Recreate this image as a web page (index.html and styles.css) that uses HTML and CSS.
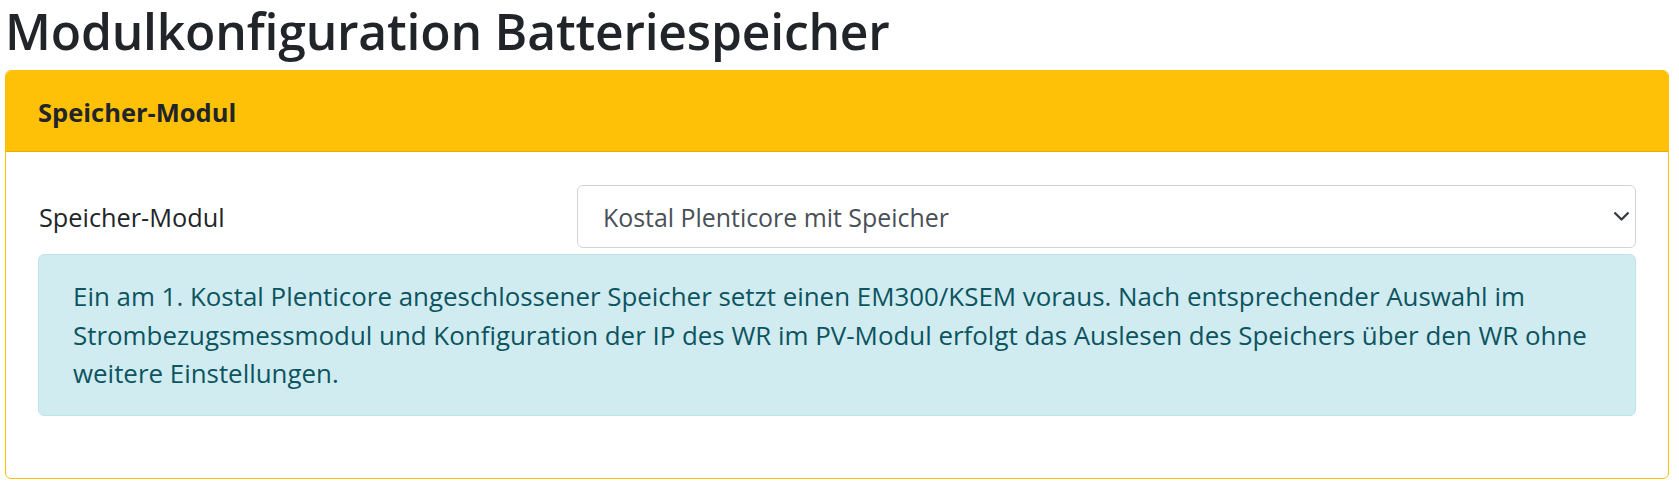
FILE: index.html
```html
<!DOCTYPE html>
<html lang="de">
<head>
<meta charset="utf-8">
<title>Modulkonfiguration Batteriespeicher</title>
<link rel="stylesheet" href="styles.css">
</head>
<body>
<div class="page">
  <h1 class="title">Modulkonfiguration Batteriespeicher</h1>
  <div class="card">
    <div class="card-header">Speicher-Modul</div>
    <div class="card-body">
      <div class="form-row">
        <label class="label">Speicher-Modul</label>
        <div class="select">
          <span class="select-text">Kostal Plenticore mit Speicher</span>
          <svg class="chevron" width="15" height="9" viewBox="0 0 15 9"><path d="M1.2 1.2l6.3 6.3 6.3-6.3" fill="none" stroke="#343a40" stroke-width="2.3" stroke-linecap="round" stroke-linejoin="round"/></svg>
        </div>
      </div>
      <div class="alert">Ein am 1. Kostal Plenticore angeschlossener Speicher setzt einen EM300/KSEM voraus. Nach entsprechender Auswahl im Strombezugsmessmodul und Konfiguration der IP des WR im PV-Modul erfolgt das Auslesen des Speichers über den WR ohne weitere Einstellungen.</div>
    </div>
  </div>
</div>
</body>
</html>
```
FILE: styles.css
```css
html, body {
  margin: 0;
  padding: 0;
  background: #fff;
}
body {
  font-family: "Open Sans", "Noto Sans", sans-serif;
  color: #212529;
  font-size: 25.5px;
  line-height: 38.4px;
}
.page {
  padding: 0 10px 0 5px;
}
.title {
  margin: 0 0 8px 0;
  font-size: 49.8px;
  font-weight: 600;
  line-height: 62px;
  color: #212529;
  letter-spacing: -0.2px;
}
.card {
  border: 1.5px solid #ffc107;
  border-radius: 6px;
  overflow: hidden;
}
.card-header {
  background: #ffc107;
  font-weight: 700;
  font-size: 25.5px;
  padding: 22px 32px 20px 32px;
  border-bottom: 1px solid #e6ac00;
}
.card-body {
  padding: 33px 32px 62px 32px;
}
.form-row {
  display: grid;
  grid-template-columns: 539px 1fr;
  align-items: center;
}
.label {
  padding-left: 1px;
  font-size: 25.3px;
}
.select {
  display: flex;
  align-items: center;
  justify-content: space-between;
  height: 61px;
  border: 1px solid #ced4da;
  border-radius: 6px;
  padding: 0 6px 0 25px;
  color: #495057;
  font-size: 24.9px;
}
.chevron {
  display: block;
}
.alert {
  margin-top: 6px;
  background: #d1ecf1;
  border: 1px solid #bee5eb;
  border-radius: 6px;
  color: #0c5460;
  font-size: 25.9px;
  padding: 22px 24px 22px 34px;
}
```
